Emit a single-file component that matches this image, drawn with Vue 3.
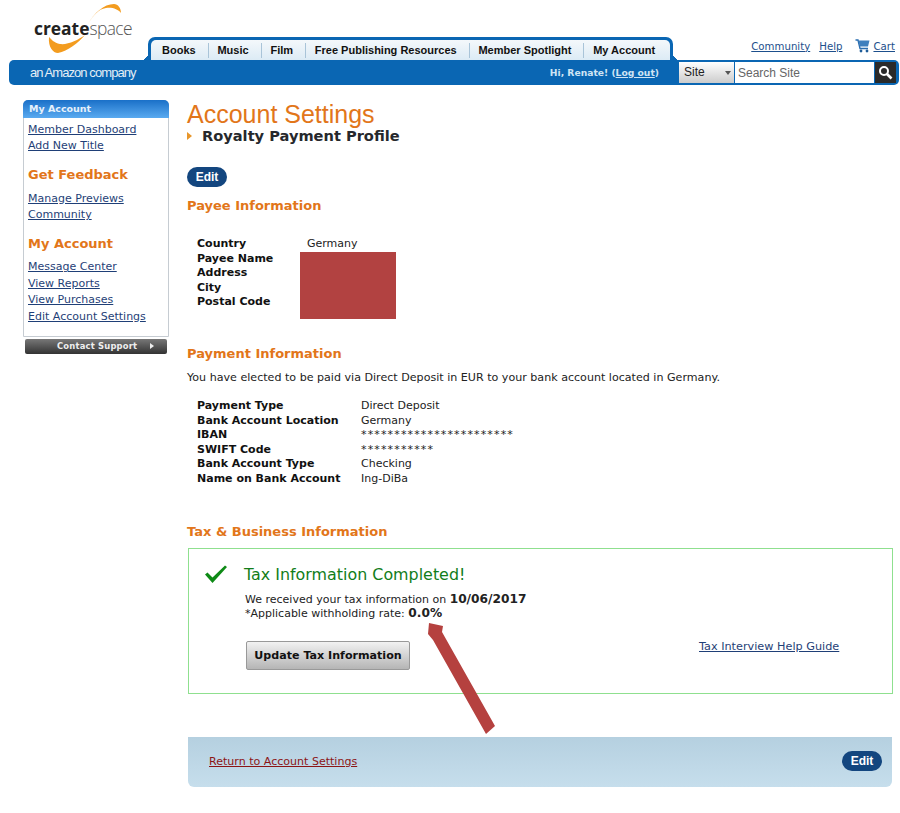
<template>
  <div class="page">
    <header class="header">
      <div class="top">
        <div class="logo">
          <svg class="swoosh" width="80" height="54" viewBox="0 0 80 54">
            <path d="M40 21 C46 10 56 1 66 1 C70 1 73 5 73 10 C70 6 64 4 58 5 C50 6 45 13 40 21 Z" fill="#f39c1f" />
            <path d="M1 34 C3 36 6 40 12 41 C20 42 30 37 37 32 C30 40 20 48 10 50 C5 50 0 44 1 34 Z" fill="#f39c1f" />
          </svg>
          <span class="logo-text"><b>create</b>space</span>
        </div>
        <nav class="tabs">
          <div class="tabs-inner">
            <a v-for="tab in tabs" :key="tab" class="tab">{{ tab }}</a>
          </div>
        </nav>
        <div class="toplinks">
          <a class="toplink">Community</a>
          <a class="toplink">Help</a>
          <span class="cart">
            <svg width="15" height="14" viewBox="0 0 15 14">
              <path d="M0.5 1 H3 L5 9.5 H13" fill="none" stroke="#2a6db0" stroke-width="1.4" />
              <path d="M3.4 1.5 H14.5 L13 7.5 H4.8 Z" fill="#3f7fbd" />
              <circle cx="6" cy="12" r="1.4" fill="#1f5c99" />
              <circle cx="12" cy="12" r="1.4" fill="#1f5c99" />
            </svg>
            <a class="toplink">Cart</a>
          </span>
        </div>
      </div>
      <div class="bar">
        <span class="amazon">an Amazon company</span>
        <span class="hi">Hi, Renate! (<a>Log out</a>)</span>
        <div class="search">
          <div class="site">Site<i class="caret"></i></div>
          <div class="field">Search Site</div>
          <div class="go">
            <svg width="15" height="15" viewBox="0 0 15 15">
              <circle cx="6" cy="6" r="4" fill="none" stroke="#fff" stroke-width="2" />
              <path d="M9 9 L13.5 13.5" stroke="#fff" stroke-width="2.6" />
            </svg>
          </div>
        </div>
      </div>
    </header>

    <div class="body">
      <aside class="side">
        <div class="panel">
          <div class="panel-head">My Account</div>
          <div class="panel-body">
            <div class="links">
              <a>Member Dashboard</a>
              <a>Add New Title</a>
            </div>
            <h4>Get Feedback</h4>
            <div class="links">
              <a>Manage Previews</a>
              <a>Community</a>
            </div>
            <h4>My Account</h4>
            <div class="links">
              <a>Message Center</a>
              <a>View Reports</a>
              <a>View Purchases</a>
              <a>Edit Account Settings</a>
            </div>
          </div>
        </div>
        <div class="support">Contact Support<i class="tri"></i></div>
      </aside>

      <main class="main">
        <h1>Account Settings</h1>
        <h2><i class="bullet"></i>Royalty Payment Profile</h2>
        <button class="edit">Edit</button>

        <h3 class="payee-title">Payee Information</h3>
        <div class="payee">
          <table class="info payee-table">
            <tbody>
              <tr v-for="row in payee" :key="row[0]">
                <th>{{ row[0] }}</th>
                <td>{{ row[1] }}</td>
              </tr>
            </tbody>
          </table>
          <div class="redact"></div>
        </div>

        <h3 class="pay-title">Payment Information</h3>
        <p class="elected">You have elected to be paid via Direct Deposit in EUR to your bank account located in Germany.</p>
        <table class="info pay-table">
          <tbody>
            <tr v-for="row in payment" :key="row[0]">
              <th>{{ row[0] }}</th>
              <td :class="{ stars: row[1].startsWith('*') }">{{ row[1] }}</td>
            </tr>
          </tbody>
        </table>

        <h3 class="tax-title">Tax &amp; Business Information</h3>
        <section class="tax">
          <div class="tax-head">
            <svg width="24" height="19" viewBox="0 0 24 19">
              <path d="M1 9.5 L3.5 7.5 L8.5 12.5 L21 0.5 L23 2 L8.5 18 Z" fill="#0e8a16" />
            </svg>
            <span>Tax Information Completed!</span>
          </div>
          <div class="tax-text">
            We received your tax information on <b>10/06/2017</b><br />
            *Applicable withholding rate: <b>0.0%</b>
          </div>
          <div class="tax-foot">
            <button class="update">Update Tax Information</button>
            <a class="guide">Tax Interview Help Guide</a>
          </div>
        </section>

        <footer class="foot">
          <a>Return to Account Settings</a>
          <button class="edit">Edit</button>
        </footer>

        <svg class="arrow" width="75" height="116" viewBox="0 0 75 116">
          <path d="M4 3 L18 6 L17 12 L70 106 L61 114 L8 20 L3 14 Z" fill="#b5413f" />
        </svg>
      </main>
    </div>
  </div>
</template>

<script setup>
const tabs = ['Books', 'Music', 'Film', 'Free Publishing Resources', 'Member Spotlight', 'My Account']

const payee = [
  ['Country', 'Germany'],
  ['Payee Name', ''],
  ['Address', ''],
  ['City', ''],
  ['Postal Code', '']
]

const payment = [
  ['Payment Type', 'Direct Deposit'],
  ['Bank Account Location', 'Germany'],
  ['IBAN', '***********************'],
  ['SWIFT Code', '***********'],
  ['Bank Account Type', 'Checking'],
  ['Name on Bank Account', 'Ing-DiBa']
]
</script>

<style>
html, body {
  margin: 0;
  background: #fff;
}
</style>

<style scoped>
.page {
  width: 900px;
  height: 813px;
  overflow: hidden;
  font-family: "DejaVu Sans", Verdana, sans-serif;
  font-size: 11px;
  color: #222;
}

/* header */
.top {
  display: flex;
  height: 60px;
  align-items: flex-end;
  padding-left: 34px;
}
.logo {
  position: relative;
  width: 114px;
  height: 60px;
}
.logo-text {
  position: absolute;
  left: 0;
  top: 16px;
  font-family: "Open Sans", sans-serif;
  font-size: 17.4px;
  font-weight: 300;
  letter-spacing: -0.6px;
  color: #555;
}
.logo-text b {
  font-weight: 700;
  letter-spacing: 0;
  color: #222;
}
.swoosh {
  position: absolute;
  left: 14px;
  top: 3px;
}
.tabs {
  position: relative;
  box-sizing: border-box;
  width: 525px;
  height: 23px;
  background: #0a66b3;
  border-radius: 7px 7px 0 0;
  padding: 3px 3px 0 3px;
}
.tabs::before,
.tabs::after {
  content: "";
  position: absolute;
  bottom: 0;
  width: 7px;
  height: 7px;
}
.tabs::before {
  left: -7px;
  background: radial-gradient(circle at 0 0, transparent 7px, #0a66b3 7px);
}
.tabs::after {
  right: -7px;
  background: radial-gradient(circle at 100% 0, transparent 7px, #0a66b3 7px);
}
.tabs-inner {
  display: flex;
  align-items: center;
  height: 20px;
  background: linear-gradient(#f4f8fb, #dcebf5);
  border-radius: 5px 5px 0 0;
}
.tab {
  font-family: "Liberation Sans", Arial, sans-serif;
  font-size: 11px;
  font-weight: 700;
  white-space: nowrap;
  color: #111;
  padding: 0 12px 0 8.8px;
  line-height: 15px;
  border-left: 1px solid #a9c4d8;
}
.tab:first-child {
  border-left: 0;
  padding-left: 11px;
}
.toplinks {
  display: flex;
  align-items: center;
  gap: 9px;
  margin-left: auto;
  padding-right: 5px;
  height: 14px;
  margin-bottom: 7px;
}
.toplink {
  color: #1d4f8c;
  text-decoration: underline;
  font-size: 10.2px;
}
.cart {
  display: flex;
  align-items: center;
  gap: 3px;
  margin-left: 4px;
}
.bar {
  display: flex;
  align-items: center;
  margin: 0 1px 0 9px;
  height: 25px;
  background: #0a66b3;
  border-radius: 5px;
  color: #fff;
}
.amazon {
  font-family: "Liberation Sans", Arial, sans-serif;
  font-size: 13px;
  letter-spacing: -0.93px;
  margin-left: 21px;
  padding-bottom: 1px;
  color: #e4eef6;
}
.hi {
  margin-left: auto;
  margin-right: 20px;
  font-weight: 700;
  font-size: 9.2px;
  color: #cfe4f4;
}
.hi a {
  text-decoration: underline;
}
.search {
  display: flex;
  height: 21px;
  margin-right: 3px;
  font-family: "Liberation Sans", Arial, sans-serif;
  font-size: 12px;
}
.site {
  position: relative;
  box-sizing: border-box;
  width: 55px;
  padding: 3px 0 0 5px;
  color: #222;
  background: linear-gradient(#fff, #ccc);
}
.caret {
  position: absolute;
  right: 3px;
  top: 9px;
  border: 3px solid transparent;
  border-top: 4px solid #555;
}
.field {
  box-sizing: border-box;
  width: 139px;
  margin-left: 1px;
  padding: 4px 0 0 3px;
  background: #fff;
  color: #666;
}
.go {
  display: flex;
  align-items: center;
  justify-content: center;
  width: 21px;
  margin-left: 1px;
  background: #2a2a2a;
}

/* body */
.body {
  display: flex;
  padding: 15px 0 0 23px;
}
.side {
  width: 146px;
  flex: none;
}
.panel {
  box-sizing: border-box;
  height: 237px;
  border: 1px solid #c6ccd2;
  border-radius: 5px 5px 0 0;
}
.panel-head {
  box-sizing: border-box;
  height: 18px;
  margin: -1px -1px 0;
  padding: 3px 0 0 6px;
  background: linear-gradient(#1a70c8, #5aaaf0);
  border-radius: 5px 5px 0 0;
  color: #e6f1fb;
  font-weight: 700;
  font-size: 9.5px;
}
.panel-body {
  padding: 3.8px 0 0 4px;
}
.links {
  display: flex;
  flex-direction: column;
  align-items: flex-start;
  line-height: 16.4px;
}
.links a {
  color: #1f3f77;
  text-decoration: underline;
  font-size: 11px;
}
.panel-body h4 {
  margin: 12.75px 0 7.25px;
  color: #e2761a;
  font-size: 13px;
  line-height: 16px;
}
.support {
  position: relative;
  box-sizing: border-box;
  width: 142px;
  height: 15px;
  margin: 2px 0 0 2px;
  padding-left: 32px;
  background: linear-gradient(#777, #333);
  border-radius: 2px;
  color: #eee;
  font-size: 8.4px;
  font-weight: 700;
  line-height: 14px;
  letter-spacing: 0.2px;
}
.tri {
  position: absolute;
  right: 10px;
  top: 4px;
  border: 3px solid transparent;
  border-left: 4px solid #eee;
}

.main {
  position: relative;
  flex: 1;
  margin-left: 18px;
  min-width: 0;
}
h1 {
  margin: 0;
  font-family: "Liberation Sans", Arial, sans-serif;
  font-size: 25px;
  font-weight: 400;
  line-height: 28px;
  color: #e2761a;
}
h2 {
  display: flex;
  align-items: center;
  margin: 0;
  font-size: 14.6px;
  line-height: 16px;
  color: #26282c;
}
.bullet {
  border: 4px solid transparent;
  border-left: 5px solid #e8962a;
  margin-right: 6px;
}
.edit {
  display: block;
  width: 40px;
  height: 20px;
  padding: 0;
  border: 0;
  border-radius: 10px;
  background: #13467f;
  color: #fff;
  font-family: "Liberation Sans", Arial, sans-serif;
  font-size: 12px;
  font-weight: 700;
}
.main > .edit {
  margin-top: 23px;
}
h3 {
  margin: 0;
  color: #e2761a;
  font-size: 13px;
  line-height: 16px;
}
.payee-title {
  margin-top: 11px;
}
.payee {
  position: relative;
  margin: 23px 0 0 10px;
  height: 98px;
}
.info {
  border-collapse: collapse;
  font-size: 11px;
  line-height: 14.6px;
}
.info th {
  padding: 0;
  text-align: left;
  font-weight: 700;
  color: #111;
}
.info td {
  padding: 0;
}
.info .stars {
  letter-spacing: 1.15px;
}
.payee-table th {
  width: 110px;
}
.redact {
  position: absolute;
  left: 103px;
  top: 15px;
  width: 96px;
  height: 67px;
  background: #b24241;
}
.pay-title {
  margin-top: 11px;
}
.elected {
  margin: 8px 0 0;
  line-height: 15px;
  font-size: 11.1px;
}
.pay-table {
  margin: 14px 0 0 10px;
}
.pay-table th {
  width: 164px;
}
.tax-title {
  margin-top: 37px;
}
.tax {
  box-sizing: border-box;
  width: 705px;
  height: 146px;
  margin: 8px 0 0 1px;
  border: 1px solid #8fe08f;
  padding: 15px 0 0 15px;
}
.tax-head {
  display: flex;
  align-items: center;
  gap: 16px;
  color: #127d1a;
  font-size: 15.9px;
  line-height: 22px;
}
.tax-text {
  margin: 7px 0 0 41px;
  font-size: 11px;
  line-height: 14.5px;
}
.tax-text b {
  font-size: 12.2px;
  line-height: 1;
}
.tax-foot {
  display: flex;
  align-items: center;
  margin: 19px 0 0 42px;
}
.update {
  width: 164px;
  height: 29px;
  padding: 0;
  border: 1px solid #999;
  border-radius: 2px;
  background: linear-gradient(#f2f2f2, #b5b5b5);
  font-family: inherit;
  font-size: 11.1px;
  font-weight: 700;
  color: #111;
}
.guide {
  margin-left: 289px;
  margin-top: -17px;
  color: #1f3f77;
  text-decoration: underline;
  font-size: 11.25px;
}
.foot {
  display: flex;
  align-items: center;
  justify-content: space-between;
  box-sizing: border-box;
  width: 704px;
  height: 50px;
  margin: 43px 0 0 1px;
  padding: 0 10px 1px 21px;
  background: linear-gradient(#b5d0e0, #c6deec);
  border-radius: 0 0 6px 6px;
}
.foot a {
  color: #8c1515;
  text-decoration: underline;
  font-size: 11.05px;
}
.arrow {
  position: absolute;
  left: 238px;
  top: 520px;
}
</style>
